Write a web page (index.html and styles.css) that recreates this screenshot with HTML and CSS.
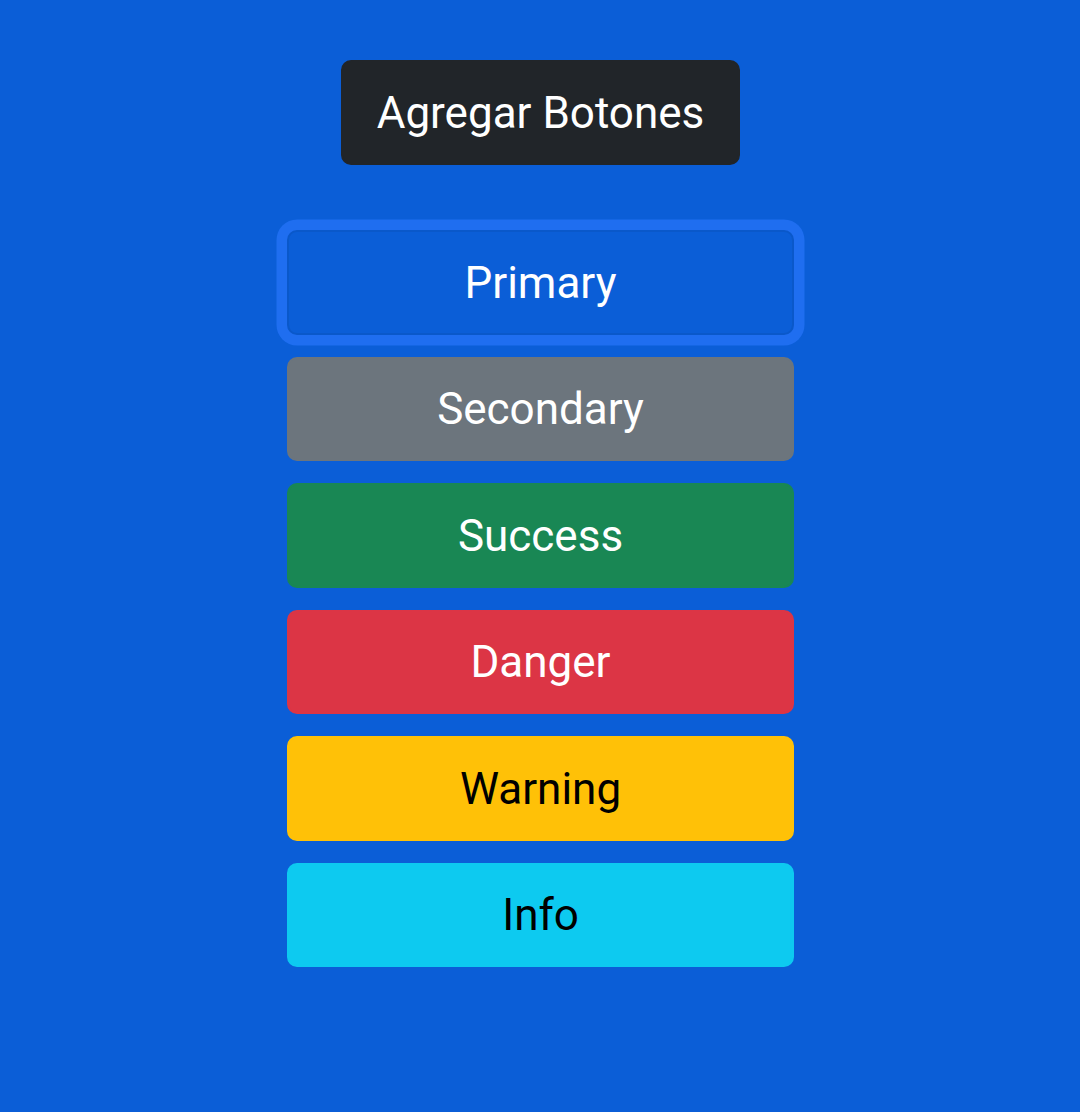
FILE: index.html
```html
<!DOCTYPE html>
<html lang="es">
<head>
<meta charset="utf-8">
<link rel="stylesheet" href="styles.css">
</head>
<body>
<main class="page">
  <button class="btn btn-dark add">Agregar Botones</button>
  <div class="list">
    <button class="btn btn-primary focus">Primary</button>
    <button class="btn btn-secondary">Secondary</button>
    <button class="btn btn-success">Success</button>
    <button class="btn btn-danger">Danger</button>
    <button class="btn btn-warning">Warning</button>
    <button class="btn btn-info">Info</button>
  </div>
</main>
</body>
</html>
```
FILE: styles.css
```css
html, body {
  margin: 0;
  padding: 0;
  background: #0b5ed7;
  height: 100%;
}
.page {
  display: flex;
  flex-direction: column;
  align-items: center;
  padding-top: 60px;
  padding-left: 1px;
}
.btn {
  font-family: Roboto, "Noto Sans", sans-serif;
  font-size: 44px;
  line-height: 60px;
  border: 2.5px solid transparent;
  border-radius: 10px;
  height: 104.5px;
  box-sizing: border-box;
  color: #fff;
  cursor: pointer;
  padding: 1px 0 0;
}
.add {
  width: 399px;
}
.list {
  margin-top: 65.5px;
  display: flex;
  flex-direction: column;
  gap: 22px;
}
.list .btn {
  width: 507px;
}
.btn-dark { background: #212529; border-color: #212529; }
.btn-primary { background: #0b5ed7; border-color: #0a58ca; }
.focus { box-shadow: 0 0 0 10.5px #1f6ef0; }
.btn-secondary { background: #6c757d; border-color: #6c757d; }
.btn-success { background: #198754; border-color: #198754; }
.btn-danger { background: #dc3545; border-color: #dc3545; }
.btn-warning { background: #ffc107; border-color: #ffc107; color: #000; }
.btn-info { background: #0dcaf0; border-color: #0dcaf0; color: #000; }
```
